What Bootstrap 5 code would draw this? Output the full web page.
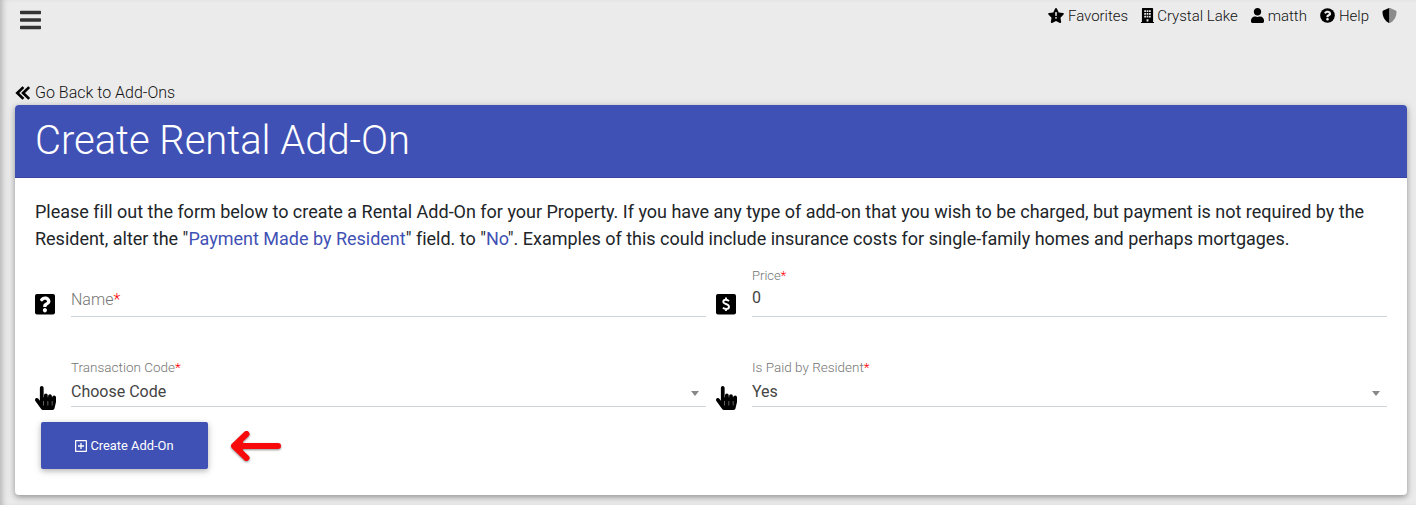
<!DOCTYPE html>
<html lang="en">
<head>
<meta charset="utf-8">
<meta name="viewport" content="width=device-width, initial-scale=1">
<title>Create Rental Add-On</title>
<link rel="stylesheet" href="https://cdn.jsdelivr.net/npm/bootstrap@5.3.0/dist/css/bootstrap.min.css">
<style>
body{background:#ebebeb;font-family:Roboto,"Liberation Sans",sans-serif;font-weight:300;color:#212529;height:505px;overflow:hidden;box-shadow:inset 6px 0 6px -4px rgba(0,0,0,.25)}
svg{display:block;flex:none}
a{color:inherit;text-decoration:none}
.topbar{height:84px;padding:8px 19px 0 20px}
.menu-btn{color:#333}
.top-links{gap:13px;font-size:15px;line-height:16px;height:16px}
.top-links a{gap:4px;color:#111}
.top-links a.site{gap:3px}
.top-links svg,.back svg{color:#000}
.top-links svg{margin-bottom:1px}
.back{height:16px;margin:1px 0 0 15px;gap:4px;font-size:16px;line-height:16px;color:#111}
.back svg{margin-bottom:1px}
.panel{margin:4px 9px 0 15px;height:390px;border:0;border-radius:4px;box-shadow:0 2px 5px rgba(0,0,0,.26),0 2px 10px rgba(0,0,0,.16)}
.panel-head{height:73px;background:#3f51b5;border-bottom:1px solid #3646a0;border-radius:4px 4px 0 0;padding:12px 20px 0}
.panel-head h1{font-size:40px;line-height:48px;font-weight:300;color:#fff;margin:0;letter-spacing:-.03px}
.intro{font-size:18px;line-height:27px;font-weight:400;margin:0;padding-top:20px;letter-spacing:-.01px}
.intro a{color:#3f51b5}
.fields{gap:10px;margin-top:13px}
.fields.selects{margin-top:38px}
.field{flex:1 1 0;min-width:0;height:52px;gap:16px}
.selects .field{gap:15px}
.field>svg.hand{margin-bottom:-3px}
.entry{border-bottom:1px solid #ced4da;height:52px;padding-top:3px}
.caption{font-size:13px;line-height:16px;color:#757575;font-weight:300}
.value{font-size:16px;line-height:24px;font-weight:400;color:#444;margin-top:2px}
.name-label{font-weight:300;color:#757575;margin-top:20px}
.selects .entry{padding-top:4px}
.selects .caption{font-size:13.5px}
.selects .value{margin-top:5px}
.req{color:red}
.caret{width:0;height:0;border:4.5px solid transparent;border-top:5px solid #888;border-bottom:0;margin-right:7px;margin-top:2px}
.actions{padding:15px 0 0 6px;gap:21px}
.create{width:167px;height:47px;background:#3f51b5;color:#fff;border-radius:2px;font-size:12.9px;font-weight:400;gap:3px;border:0;padding:0;box-shadow:0 2px 5px rgba(0,0,0,.2),0 2px 10px rgba(0,0,0,.12)}
.pointer-arrow{filter:drop-shadow(0 1px 1px rgba(0,0,0,.45))}
</style>
</head>
<body>
<svg width="0" height="0" class="d-none"><defs>
<symbol id="hand" viewBox="0 0 448 512"><path fill="currentColor" d="M448 240v96c0 3.084-.356 6.159-1.063 9.162l-32 136C410.686 499.23 394.562 512 376 512H168a40.004 40.004 0 0 1-32.35-16.473l-127.997-176c-12.993-17.866-9.043-42.883 8.822-55.876 17.867-12.994 42.884-9.043 55.877 8.823L104 315.992V40c0-22.091 17.908-40 40-40s40 17.909 40 40v200h8v-40c0-22.091 17.908-40 40-40s40 17.909 40 40v40h8v-24c0-22.091 17.908-40 40-40s40 17.909 40 40v24h8c0-22.091 17.908-40 40-40s40 17.909 40 40zm-256 80h-8v96h8v-96zm88 0h-8v96h8v-96zm88 0h-8v96h8v-96z"/></symbol>
<symbol id="question" viewBox="0 0 512 512"><path fill="currentColor" d="M262.655 90c-54.497 0-89.255 22.957-116.549 63.758-3.536 5.286-2.353 12.415 2.715 16.258l34.699 26.31c5.205 3.947 12.621 3.008 16.665-2.122 17.864-22.658 30.113-35.797 57.303-35.797 20.429 0 45.698 13.148 45.698 32.958 0 14.976-12.363 22.667-32.534 33.976C247.128 238.528 216 254.941 216 296v4c0 6.627 5.373 12 12 12h56c6.627 0 12-5.373 12-12v-1.333c0-28.462 83.186-29.647 83.186-106.667 0-58.002-60.165-102-116.531-102zM256 338c-25.365 0-46 20.635-46 46 0 25.364 20.635 46 46 46s46-20.636 46-46c0-25.365-20.635-46-46-46z"/></symbol>
</defs></svg>

<header class="topbar d-flex justify-content-between align-items-start">
  <a href="#" class="menu-btn" aria-label="Menu"><svg width="21" height="24" viewBox="0 0 448 512"><path fill="currentColor" d="M16 132h416c8.837 0 16-7.163 16-16V76c0-8.837-7.163-16-16-16H16C7.163 60 0 67.163 0 76v40c0 8.837 7.163 16 16 16zm0 160h416c8.837 0 16-7.163 16-16v-40c0-8.837-7.163-16-16-16H16c-8.837 0-16 7.163-16 16v40c0 8.837 7.163 16 16 16zm0 160h416c8.837 0 16-7.163 16-16v-40c0-8.837-7.163-16-16-16H16c-8.837 0-16 7.163-16 16v40c0 8.837 7.163 16 16 16z"/></svg></a>
  <nav class="top-links d-flex align-items-center">
    <a href="#" class="d-flex align-items-center"><svg width="16" height="15" viewBox="18 0 540 512"><path fill="currentColor" d="M259.3 17.8L194 150.2 47.9 171.5c-26.2 3.8-36.7 36.1-17.7 54.6l105.7 103-25 145.5c-4.5 26.3 23.2 46 46.4 33.7L288 439.6l130.7 68.7c23.2 12.2 50.9-7.4 46.4-33.7l-25-145.5 105.7-103c19-18.5 8.5-50.8-17.7-54.6L382 150.2 316.7 17.8c-11.7-23.6-45.6-23.9-57.4 0z"/><path fill="#ebebeb" d="M257 145h62l-10 130h-42z"/><circle cx="288" cy="336" r="32" fill="#ebebeb"/></svg>Favorites</a>
    <a href="#" class="site d-flex align-items-center"><svg width="13" height="15" viewBox="0 0 448 512"><path fill="currentColor" fill-rule="evenodd" d="M436 480h-20V24c0-13-11-24-24-24H56C43 0 32 11 32 24v456H12c-7 0-12 5-12 12v20h448v-20c0-7-5-12-12-12zM112 76h60v56h-60zm82 0h60v56h-60zm82 0h60v56h-60zM112 172h60v56h-60zm82 0h60v56h-60zm82 0h60v56h-60zM112 268h60v56h-60zm82 0h60v56h-60zm82 0h60v56h-60zM192 384h64v80h-64z"/></svg>Crystal Lake</a>
    <a href="#" class="d-flex align-items-center"><svg width="13" height="15" viewBox="0 0 448 512"><path fill="currentColor" d="M224 256c70.7 0 128-57.3 128-128S294.7 0 224 0 96 57.3 96 128s57.3 128 128 128zm89.6 32h-16.7c-22.2 10.2-46.9 16-72.9 16s-50.6-5.8-72.9-16h-16.7C60.2 288 0 348.2 0 422.4V464c0 26.5 21.5 48 48 48h352c26.5 0 48-21.5 48-48v-41.6c0-74.2-60.2-134.4-134.4-134.4z"/></svg>matth</a>
    <a href="#" class="d-flex align-items-center"><svg width="15" height="15" viewBox="0 0 512 512"><circle cx="256" cy="256" r="250" fill="currentColor"/><use href="#question" color="#ebebeb"/></svg>Help</a>
    <a href="#" aria-label="Privacy"><svg width="15" height="15" viewBox="0 0 512 512"><path fill="currentColor" d="M256 0c-6 0-12 1-18 4L46 84c-18 7-30 25-30 44 0 199 114 336 222 380q9 4 18 4z"/><path fill="#8b8b8b" d="M256 0c6 0 12 1 18 4l192 80c18 7 30 25 30 44 0 199-114 336-222 380q-9 4-18 4z"/></svg></a>
  </nav>
</header>

<a href="#" class="back d-flex align-items-center"><svg width="16" height="16" viewBox="0 0 16 16"><path d="M8.4 2.1 2.3 8l6.1 5.9M14.2 2.1 8.1 8l6.1 5.9" fill="none" stroke="currentColor" stroke-width="2.7"/></svg>Go Back to Add-Ons</a>

<main class="panel card">
  <div class="panel-head"><h1>Create Rental Add-On</h1></div>
  <div class="px-3 mx-1">
    <p class="intro">Please fill out the form below to create a Rental Add-On for your Property. If you have any type of add-on that you wish to be charged, but payment is not required by the Resident, alter the "<a href="#">Payment Made by Resident</a>" field. to "<a href="#">No</a>". Examples of this could include insurance costs for single-family homes and perhaps mortgages.</p>
    <div class="fields d-flex">
      <div class="field d-flex align-items-end">
        <svg width="20" height="24" viewBox="0 0 448 512" preserveAspectRatio="none"><rect y="21" width="448" height="437" rx="44"/><use href="#question" x="-34" y="-16" width="512" height="512" color="#fff"/></svg>
        <div class="entry flex-fill"><div class="value name-label">Name<span class="req">*</span></div></div>
      </div>
      <div class="field d-flex align-items-end">
        <svg width="20" height="24" viewBox="0 0 448 512" preserveAspectRatio="none"><rect y="21" width="448" height="437" rx="44"/><path d="M290 174c-18-22-42-31-68-31-34 0-59 17-59 44 0 61 128 34 128 105 0 30-26 49-63 49-29 0-54-10-72-31M224 96v48m0 196v44" fill="none" stroke="#fff" stroke-width="42"/></svg>
        <div class="entry flex-fill"><div class="caption">Price<span class="req">*</span></div><div class="value">0</div></div>
      </div>
    </div>
    <div class="fields selects d-flex">
      <div class="field d-flex align-items-end">
        <svg class="hand" width="21" height="24" color="#000"><use href="#hand"/></svg>
        <div class="entry flex-fill"><div class="caption">Transaction Code<span class="req">*</span></div><div class="value d-flex justify-content-between align-items-center">Choose Code<span class="caret"></span></div></div>
      </div>
      <div class="field d-flex align-items-end">
        <svg class="hand" width="21" height="24" color="#000"><use href="#hand"/></svg>
        <div class="entry flex-fill"><div class="caption">Is Paid by Resident<span class="req">*</span></div><div class="value d-flex justify-content-between align-items-center">Yes<span class="caret"></span></div></div>
      </div>
    </div>
    <div class="actions d-flex align-items-center">
      <button class="create btn d-flex align-items-center justify-content-center"><svg width="12" height="12" viewBox="0 0 12 12"><path d="M1.2.6h9.6q.6 0 .6.6v9.6q0 .6-.6.6H1.2q-.6 0-.6-.6V1.2q0-.6.6-.6zM6 3v6M3 6h6" fill="none" stroke="currentColor" stroke-width="1.3"/></svg>Create Add-On</button>
      <svg class="pointer-arrow" width="52" height="34" viewBox="0 0 52 34"><path d="M49 17H6M17.5 5 5 17l12.5 12" fill="none" stroke="#f90a0a" stroke-width="6" stroke-linecap="round" stroke-linejoin="round"/><path d="M5 17 14 10v14z" fill="#f90a0a"/></svg>
    </div>
  </div>
</main>
<script src="https://cdn.jsdelivr.net/npm/bootstrap@5.3.0/dist/js/bootstrap.bundle.min.js"></script>
</body>
</html>
